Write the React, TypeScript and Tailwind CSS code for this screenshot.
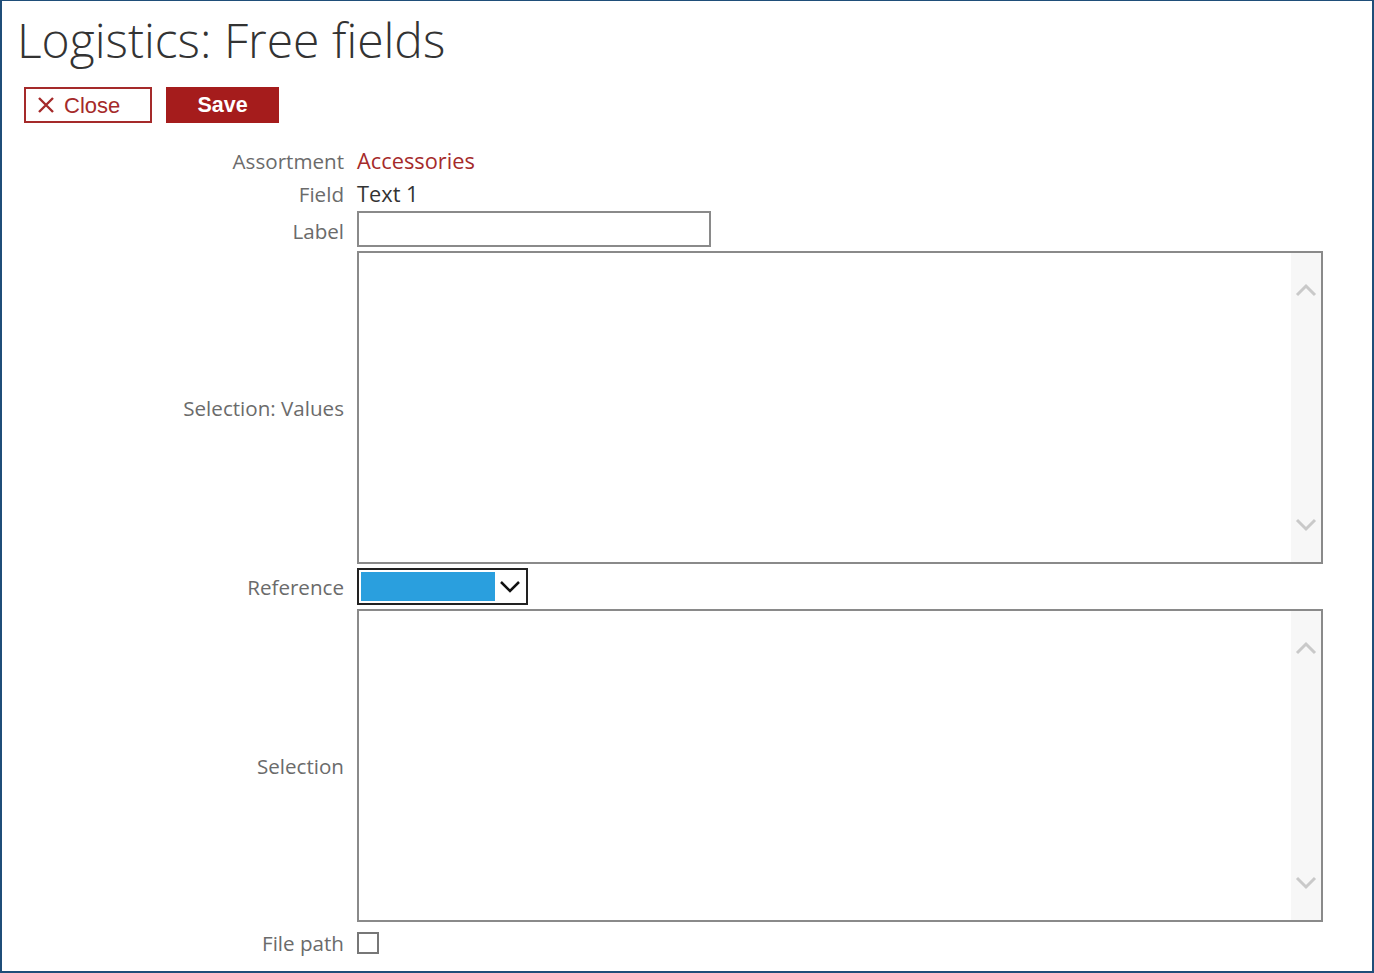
import React from "react";

function Chevron({ dir, className }: { dir: "up" | "down"; className?: string }) {
  return (
    <svg width="22" height="14" viewBox="0 0 22 14" className={className}>
      <path
        d={dir === "up" ? "M2 12 L11 3 L20 12" : "M2 2 L11 11 L20 2"}
        fill="none"
        stroke="currentColor"
        strokeWidth="3"
      />
    </svg>
  );
}

function ScrollBox() {
  return (
    <div className="flex h-[313px] w-[966px] border-2 border-[#8a8a8a] bg-white">
      <div className="flex-1" />
      {/* fake scrollbar */}
      <div className="flex w-[30px] flex-col items-center justify-between bg-[#f7f7f7] py-[30px] text-[#c9c9c9]">
        <Chevron dir="up" />
        <Chevron dir="down" />
      </div>
    </div>
  );
}

export default function App() {
  const label = "text-right text-[20.6px] text-[#6b6b6b] leading-none";
  const lowLabel = label + " pt-[5px]";
  return (
    <div
      className="h-[973px] w-[1374px] border-2 border-t-[1px] border-[#1f4e79] bg-white"
      style={{ fontFamily: '"Open Sans", sans-serif' }}
    >
      <h1 className="ml-[15px] mt-[9px] text-[48px] font-light leading-[60px] text-[#333]">
        Logistics: Free fields
      </h1>

      <div
        className="ml-[22px] mt-[17px] flex gap-[14px]"
        style={{ fontFamily: '"Liberation Sans", Arial, sans-serif' }}
      >
        <button className="flex h-[36px] w-[128px] items-center gap-[9px] border-2 border-[#a52a2a] bg-white pl-[11px] text-[22px] text-[#a52a2a]">
          <svg width="18" height="18" viewBox="0 0 18 18">
            <path d="M2 2 L16 16 M16 2 L2 16" stroke="#a52a2a" strokeWidth="2.4" />
          </svg>
          Close
        </button>
        <button className="h-[36px] w-[113px] bg-[#a51c1c] text-[21.5px] font-bold text-white">
          Save
        </button>
      </div>

      <div className="mt-[23px] grid grid-cols-[342px_1fr] items-center gap-x-[13px]">
        <div className={label}>Assortment</div>
        <div className="flex h-[31px] items-center text-[21.8px] text-[#a52a2a]">Accessories</div>

        <div className={label}>Field</div>
        <div className="flex h-[34px] items-center text-[21.8px] text-[#333]">Text 1</div>

        <div className={lowLabel}>Label</div>
        <div className="h-[36px] w-[354px] border-2 border-[#8a8a8a]" />

        <div className={lowLabel}>Selection: Values</div>
        <div className="mt-[4px]">
          <ScrollBox />
        </div>

        <div className={lowLabel}>Reference</div>
        <div className="mt-[4px] flex h-[37px] w-[171px] items-center border-2 border-[#222] p-[2px]">
          <div className="h-full w-[134px] bg-[#2a9fde]" />
          <div className="flex flex-1 items-center justify-center text-[#111]">
            <svg width="22" height="14" viewBox="0 0 22 14">
              <path d="M2 2 L11 11 L20 2" fill="none" stroke="currentColor" strokeWidth="2.5" />
            </svg>
          </div>
        </div>

        <div className={lowLabel}>Selection</div>
        <div className="mt-[4px]">
          <ScrollBox />
        </div>

        <div className={label + " pt-[11px]"}>File path</div>
        <div className="mt-[10px] h-[22px] w-[22px] border-2 border-[#777]" />
      </div>
    </div>
  );
}
